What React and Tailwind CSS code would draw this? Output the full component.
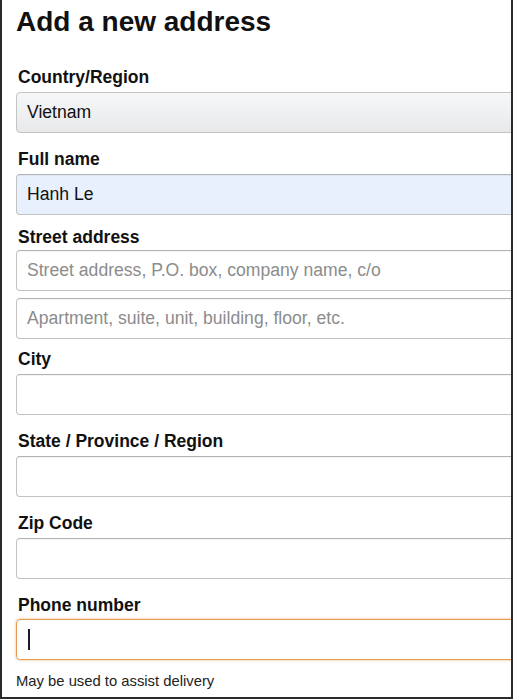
import React from "react";

const font = { fontFamily: '"Liberation Sans", Arial, sans-serif' };

function Label({ children, className = "" }) {
  return (
    <div className={"text-[17.5px] leading-[20px] font-bold text-[#111] pl-[2px] " + className}>
      {children}
    </div>
  );
}

function Input({ placeholder, value, className = "" }) {
  return (
    <div
      className={
        "w-[520px] h-[41px] rounded-[4px] border border-[#c2c2c2] border-t-[#b3b3b3] shadow-[inset_0_1px_0_rgba(0,0,0,0.04)] flex items-center pl-[10px] text-[17.6px] " +
        className
      }
    >
      {value ? (
        <span className="text-[#111]">{value}</span>
      ) : placeholder ? (
        <span className="text-[#8c8c8c]">{placeholder}</span>
      ) : null}
    </div>
  );
}

export default function App() {
  return (
    <div className="bg-white" style={font}>
      <div className="w-[513px] h-[699px] border-l-2 border-r-2 border-b-2 border-[#2a2a2a] overflow-hidden bg-white pl-[14px] pt-[6px]">
        <h1 className="text-[28px] leading-[32px] font-bold text-[#111]">Add a new address</h1>

        <Label className="mt-[29px]">Country/Region</Label>
        <div className="mt-[5px] w-[520px] h-[41px] rounded-[4px] border border-[#c4c4c4] bg-gradient-to-b from-[#f6f7f8] to-[#e8e9eb] flex items-center pl-[10px] text-[17.6px] text-[#111]">
          Vietnam
        </div>

        <Label className="mt-[16px]">Full name</Label>
        <Input className="mt-[5px] bg-[#e8f0fe]" value="Hanh Le" />

        <Label className="mt-[12px]">Street address</Label>
        <Input className="mt-[3px]" placeholder="Street address, P.O. box, company name, c/o" />
        <Input className="mt-[7px]" placeholder="Apartment, suite, unit, building, floor, etc." />

        <Label className="mt-[10px]">City</Label>
        <Input className="mt-[5px]" />

        <Label className="mt-[16px]">State / Province / Region</Label>
        <Input className="mt-[5px]" />

        <Label className="mt-[16px]">Zip Code</Label>
        <Input className="mt-[5px]" />

        <Label className="mt-[16px]">Phone number</Label>
        <div className="mt-[4px] w-[520px] h-[41px] rounded-[4px] border border-[#e39a55] shadow-[0_0_2px_1px_rgba(240,170,100,0.4)] flex items-center pl-[11px]">
          <span className="block w-[2px] h-[21px] bg-[#1a1a2a]" />
        </div>

        <div className="mt-[12px] text-[14.8px] leading-[18px] text-[#222]">May be used to assist delivery</div>
      </div>
    </div>
  );
}
